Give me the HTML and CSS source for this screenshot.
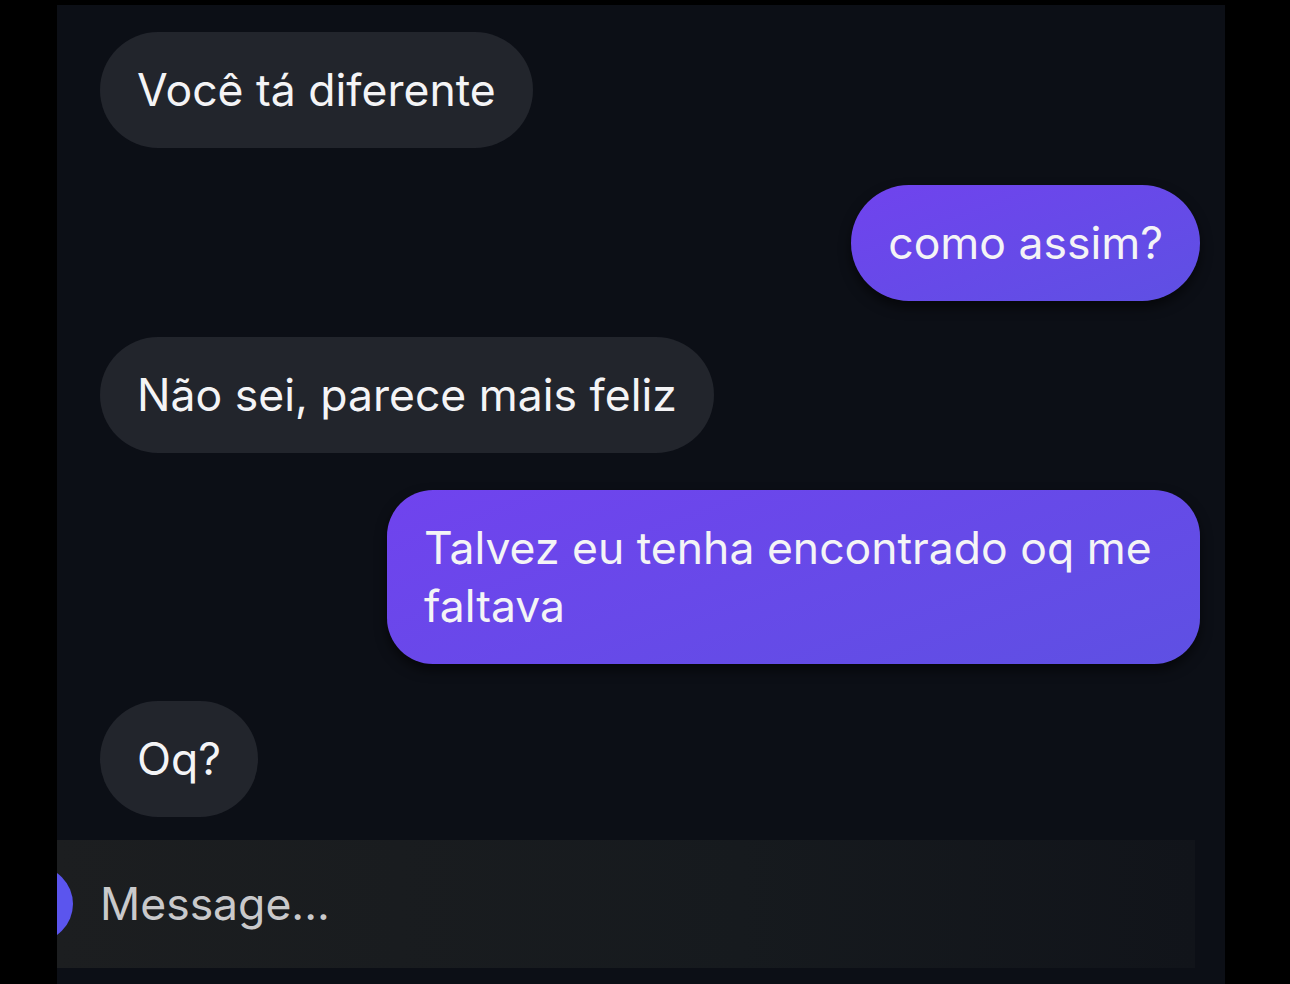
FILE: index.html
```html
<!DOCTYPE html>
<html lang="pt-br">
<head>
    <meta charset="UTF-8">
    <meta name="viewport" content="width=device-width, initial-scale=1.0">
    <title>Conversa</title>
    <link rel="stylesheet" href="styles.css">
</head>
<body>

    <div class="tela">
        <!-- Mensagens -->
        <div class="mensagens">
            <div class="msg recebida">Você tá diferente</div>
            <div class="msg enviada">como assim?</div>
            <div class="msg recebida">Não sei, parece mais feliz</div>
            <div class="msg enviada longa">Talvez eu tenha encontrado oq me faltava</div>
            <div class="msg recebida">Oq?</div>
        </div>

        <!-- Campo de mensagem -->
        <div class="barra">
            <span class="bolinha"></span>
            <span class="placeholder">Message...</span>
        </div>
    </div>

</body>
</html>
```

FILE: styles.css
```css
body {
    margin: 0;
    padding: 5px 65px 0 57px;
    background: #000;
    font-family: Inter, "Noto Sans", sans-serif;
    height: 979px;
    overflow: hidden;
}

.tela {
    height: 979px;
    background: #0c0f16;
    overflow: hidden;
    display: flex;
    flex-direction: column;
}

.mensagens {
    display: flex;
    flex-direction: column;
    gap: 36.7px;
    padding: 27px 25px 0 43px;
    height: 808px;
    box-sizing: border-box;
}

.msg {
    font-size: 44.5px;
    line-height: 58px;
    color: #f4f4f6;
    padding: 29px 37px;
    border-radius: 58px;
    max-width: 740px;
}

.recebida {
    align-self: flex-start;
    background: #22252c;
}

.enviada {
    align-self: flex-end;
    background: linear-gradient(160deg, #7043ee, #5e50e3);
    box-shadow: 0 6px 12px rgba(0, 0, 0, 0.55);
}

.longa {
    padding-right: 36px;
    border-radius: 46px;
}

.barra {
    margin-top: 27px;
    height: 128px;
    width: 1138px;
    background: linear-gradient(to right, #1c1e20, #161a1e 60%, #11141a);
    display: flex;
    align-items: center;
    gap: 27px;
}

.bolinha {
    width: 76px;
    height: 76px;
    border-radius: 50%;
    background: #5b55ee;
    margin-left: -60px;
    flex-shrink: 0;
}

.placeholder {
    font-size: 44.5px;
    color: #c9c9cb;
}
```
